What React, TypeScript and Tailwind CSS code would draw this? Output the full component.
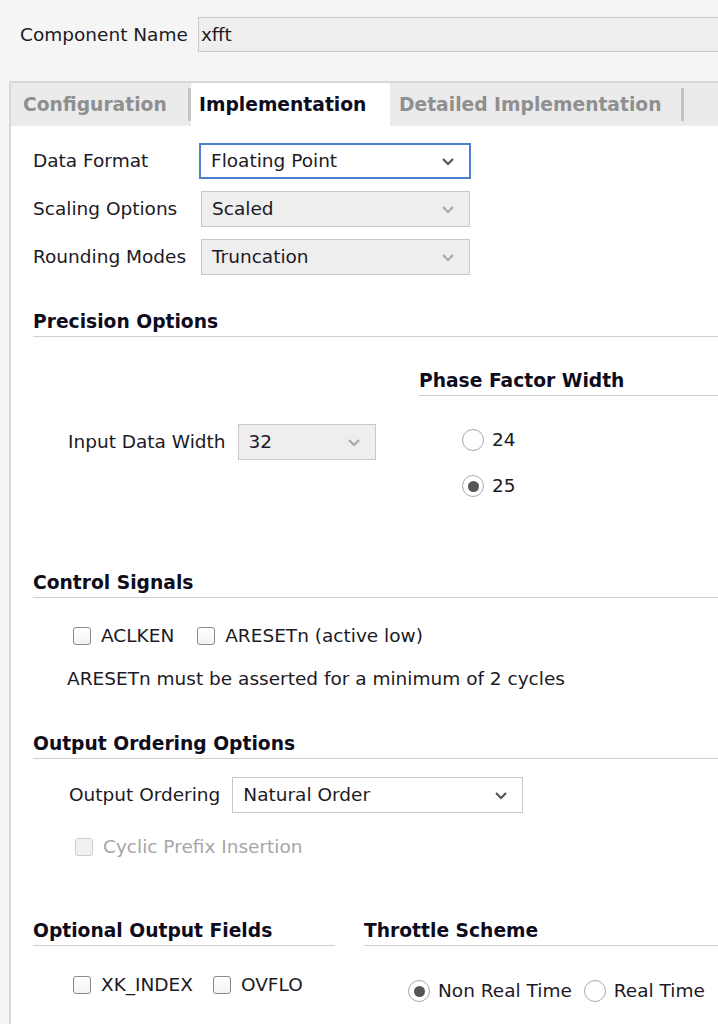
import React from "react";

const Chevron = ({ dim }: { dim?: boolean }) => (
    <svg width="14" height="9" viewBox="0 0 14 9" className="shrink-0">
        <path d="M2 2 L7 7 L12 2" fill="none" stroke={dim ? "#a8a8a8" : "#555555"} strokeWidth="2.2" />
    </svg>
);

const Select = ({
    value,
    width,
    variant,
}: {
    value: string;
    width: string;
    variant: "focus" | "disabled" | "normal";
}) => {
    const box =
        variant === "focus"
            ? "border-2 border-[#4c7fd0] bg-white"
            : variant === "disabled"
              ? "border border-[#c8c8c8] bg-[#eeeeee]"
              : "border border-[#c8c8c8] bg-white";
    return (
        <div className={`flex h-[36px] shrink-0 items-center justify-between pl-[10px] pr-[14px] ${width} ${box}`}>
            <span className="text-[#1c1a24]">{value}</span>
            <Chevron dim={variant === "disabled"} />
        </div>
    );
};

const Checkbox = ({ label, disabled }: { label: string; disabled?: boolean }) => (
    <label className="flex items-center gap-[10px] whitespace-nowrap">
        <span
            className={`h-[18px] w-[18px] rounded-[3px] border ${disabled ? "border-[#cfcfcf] bg-[#f0f0f0]" : "border-[#8a8a8a] bg-gradient-to-b from-white to-[#f2f2f2]"}`}
        />
        <span className={disabled ? "text-[#a6a6a6]" : "text-[#1c1a24]"}>{label}</span>
    </label>
);

const Radio = ({ label, checked }: { label: string; checked?: boolean }) => (
    <label className="flex items-center gap-[8px] whitespace-nowrap">
        <span className="flex h-[22px] w-[22px] items-center justify-center rounded-full border-[1.5px] border-[#a9a9a9] bg-white">
            {checked && <span className="h-[11px] w-[11px] rounded-full bg-[#555555]" />}
        </span>
        <span className="text-[#1c1a24]">{label}</span>
    </label>
);

const Heading = ({ children, className = "" }: { children: React.ReactNode; className?: string }) => (
    <div
        className={`whitespace-nowrap border-b border-[#cfcfcf] pb-[2px] text-[18.7px] font-bold leading-[24px] text-[#0e0c1c] ${className}`}
    >
        {children}
    </div>
);

export default function App() {
    return (
        <div
            className="h-[1024px] w-[718px] overflow-hidden whitespace-nowrap bg-[#f5f5f5] text-[18.5px] leading-[24px]"
            style={{ fontFamily: '"DejaVu Sans", "Noto Sans", sans-serif' }}
        >
            {/* Component name */}
            <div className="flex items-center pl-[20px] pt-[17px]">
                <span className="mr-[10px] shrink-0 text-[#1c1a24]">Component Name</span>
                <div className="flex h-[35px] w-[600px] shrink-0 items-center border border-[#c8c8c8] bg-[#eeeeee] pl-[2px] text-[#1c1a24]">
                    xfft
                </div>
            </div>

            {/* Tab panel */}
            <div className="ml-[9px] mt-[29px] h-[1000px] border-l-2 border-t-2 border-[#d8d8d8]">
                <div className="flex h-[43px] bg-[#ebebeb] text-[18.7px] font-bold">
                    <div className="flex w-[177px] items-center pl-[12px] text-[#8f8f8f]">Configuration</div>
                    <div className="my-[5px] w-[3px] bg-[#c4c4c4]" />
                    <div className="flex w-[199px] items-center bg-white pl-[8px] text-[#0e0c1c]">Implementation</div>
                    <div className="flex w-[291px] items-center pl-[9px] text-[#8f8f8f]">Detailed Implementation</div>
                    <div className="my-[5px] w-[3px] bg-[#c4c4c4]" />
                </div>

                <div className="h-full bg-white pl-[22px]">
                    {/* Top selects */}
                    <div className="flex flex-col gap-[12px] pt-[17px]">
                        <div className="flex items-center">
                            <span className="w-[166px] shrink-0 text-[#1c1a24]">Data Format</span>
                            <Select value="Floating Point" width="w-[272px]" variant="focus" />
                        </div>
                        <div className="flex items-center">
                            <span className="w-[168px] shrink-0 text-[#1c1a24]">Scaling Options</span>
                            <Select value="Scaled" width="w-[269px]" variant="disabled" />
                        </div>
                        <div className="flex items-center">
                            <span className="w-[168px] shrink-0 text-[#1c1a24]">Rounding Modes</span>
                            <Select value="Truncation" width="w-[269px]" variant="disabled" />
                        </div>
                    </div>

                    {/* Precision options */}
                    <Heading className="mt-[35px]">Precision Options</Heading>
                    <div className="flex">
                        <div className="w-[386px] shrink-0 pl-[35px] pt-[87px]">
                            <div className="flex items-center">
                                <span className="mr-[12px] text-[#1c1a24]">Input Data Width</span>
                                <Select value="32" width="w-[138px]" variant="disabled" />
                            </div>
                        </div>
                        <div className="flex-1">
                            <Heading className="mt-[32px]">Phase Factor Width</Heading>
                            <div className="flex flex-col gap-[22px] pl-[43px] pt-[32px]">
                                <Radio label="24" />
                                <Radio label="25" checked />
                            </div>
                        </div>
                    </div>

                    {/* Control signals */}
                    <Heading className="mt-[73px]">Control Signals</Heading>
                    <div className="flex gap-[23px] pl-[40px] pt-[26px]">
                        <Checkbox label="ACLKEN" />
                        <Checkbox label="ARESETn (active low)" />
                    </div>
                    <div className="pl-[34px] pt-[19px] text-[#1c1a24]">
                        ARESETn must be asserted for a minimum of 2 cycles
                    </div>

                    {/* Output ordering */}
                    <Heading className="mt-[41px]">Output Ordering Options</Heading>
                    <div className="flex items-center pl-[36px] pt-[18px]">
                        <span className="mr-[12px] text-[#1c1a24]">Output Ordering</span>
                        <Select value="Natural Order" width="w-[291px]" variant="normal" />
                    </div>
                    <div className="pl-[42px] pt-[22px]">
                        <Checkbox label="Cyclic Prefix Insertion" disabled />
                    </div>

                    {/* Optional fields / throttle */}
                    <div className="mt-[60px] flex gap-[29px]">
                        <div className="w-[302px] shrink-0">
                            <Heading>Optional Output Fields</Heading>
                            <div className="flex gap-[20px] pl-[40px] pt-[27px]">
                                <Checkbox label="XK_INDEX" />
                                <Checkbox label="OVFLO" />
                            </div>
                        </div>
                        <div className="flex-1">
                            <Heading>Throttle Scheme</Heading>
                            <div className="flex gap-[12px] pl-[44px] pt-[33px]">
                                <Radio label="Non Real Time" checked />
                                <Radio label="Real Time" />
                            </div>
                        </div>
                    </div>
                </div>
            </div>
        </div>
    );
}
